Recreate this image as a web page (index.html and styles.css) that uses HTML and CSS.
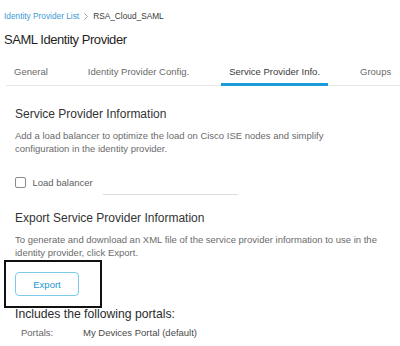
FILE: index.html
```html
<!DOCTYPE html>
<html lang="en">
<head>
<meta charset="utf-8">
<title>SAML Identity Provider</title>
<link rel="stylesheet" href="styles.css">
</head>
<body>
<div class="page">
  <nav class="crumbs">
    <a class="crumb-link">Identity Provider List</a>
    <svg class="crumb-sep" width="4" height="7" viewBox="0 0 4 7"><path d="M0.5 0.5 L3.5 3.5 L0.5 6.5" fill="none" stroke="#9a9a9a" stroke-width="0.9"/></svg>
    <span class="crumb-current">RSA_Cloud_SAML</span>
  </nav>
  <h1 class="title">SAML Identity Provider</h1>
  <div class="tabs">
    <div class="tab">General</div>
    <div class="tab">Identity Provider Config.</div>
    <div class="tab tab-active">Service Provider Info.</div>
    <div class="tab">Groups</div>
  </div>
  <section class="panel">
    <h2 class="section-title">Service Provider Information</h2>
    <p class="desc desc-narrow">Add a load balancer to optimize the load on Cisco ISE nodes and simplify configuration in the identity provider.</p>
    <div class="check-row">
      <span class="checkbox"></span>
      <span class="check-label">Load balancer</span>
      <span class="field"></span>
    </div>
    <h2 class="section-title section-gap">Export Service Provider Information</h2>
    <p class="desc">To generate and download an XML file of the service provider information to use in the identity provider, click Export.</p>
    <div class="export-wrap">
      <button class="btn-export">Export</button>
    </div>
    <h3 class="portals-title">Includes the following portals:</h3>
    <div class="portals-row">
      <span class="portals-label">Portals:</span>
      <span class="portals-value">My Devices Portal (default)</span>
    </div>
  </section>
</div>
</body>
</html>
```
FILE: styles.css
```css
* { box-sizing: border-box; }
html, body { margin: 0; padding: 0; background: #ffffff; }
body {
  font-family: "Liberation Sans", Arial, sans-serif;
  color: #333;
}
.page {
  padding: 10px 0 0 4px;
  width: 400px;
}
.crumbs {
  display: flex;
  align-items: center;
  height: 12px;
  line-height: 12px;
  font-size: 8.3px;
}
.crumb-link { color: #3d9ad6; }
.crumb-sep { margin: 0 5px 0 5px; }
.crumb-current { color: #3a3a3a; }

.title {
  margin: 10px 0 0 0;
  font-size: 13px;
  line-height: 16px;
  font-weight: normal;
  letter-spacing: -0.45px;
  color: #1f1f1f;
}

.tabs {
  display: flex;
  gap: 24px;
  margin: 18px 0 0 2px;
  border-bottom: 1px solid #e6e6e6;
}
.tab {
  position: relative;
  padding: 0 8px 7px 8px;
  font-size: 9.5px;
  line-height: 12px;
  color: #6a6a6a;
  white-space: nowrap;
}
.tab-active { color: #3a3a3c; }
.tab-active::after {
  content: "";
  position: absolute;
  left: 0;
  right: 0;
  bottom: -1px;
  height: 3px;
  background: #1b9bd8;
}

.panel {
  padding: 0 6px 0 11px;
}
.section-title {
  margin: 21px 0 0 0;
  font-size: 12px;
  line-height: 15px;
  font-weight: normal;
  color: #333;
}
.section-gap { margin-top: 16px; }
.desc {
  margin: 7px 0 0 0;
  font-size: 9.5px;
  line-height: 13px;
  color: #6b6b6b;
}
.desc-narrow { max-width: 330px; }

.check-row {
  display: flex;
  align-items: flex-start;
  margin-top: 22px;
}
.checkbox {
  width: 11px;
  height: 11px;
  border: 1px solid #8a8a8a;
  border-radius: 2px;
  background: #fff;
}
.check-label {
  margin-left: 6.5px;
  font-size: 9.5px;
  line-height: 12px;
  color: #5e5e5e;
}
.field {
  width: 135px;
  height: 18px;
  margin-left: 10px;
  border-bottom: 1px solid #dcdcdc;
}

.export-wrap {
  position: relative;
  display: flex;
  margin-top: 13px;
}
.export-wrap::before {
  content: "";
  position: absolute;
  left: -11px;
  top: -12px;
  width: 94px;
  height: 44px;
  border: 2px solid #111;
  pointer-events: none;
}
.btn-export {
  width: 64px;
  height: 24px;
  padding: 0;
  border: 1px solid #7ccbec;
  border-radius: 4px;
  background: #fff;
  color: #1d98d4;
  font-family: inherit;
  font-size: 9.5px;
}

.portals-title {
  margin: 10.5px 0 0 0;
  font-size: 12.2px;
  line-height: 15px;
  font-weight: normal;
  color: #2b2b2b;
}
.portals-row {
  display: flex;
  margin-top: 4.5px;
  padding-left: 6px;
  font-size: 9.5px;
  line-height: 13px;
}
.portals-label {
  width: 62px;
  color: #666;
}
.portals-value { color: #4a4a4a; }
```
